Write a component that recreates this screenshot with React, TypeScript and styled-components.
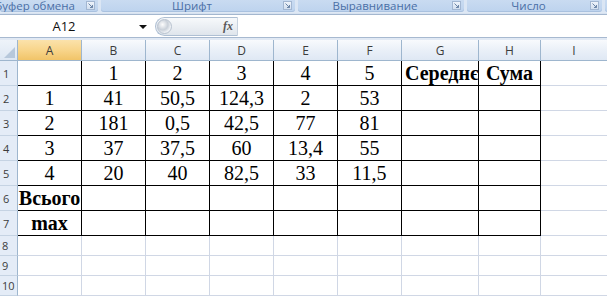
import styled, { createGlobalStyle } from 'styled-components';

const GlobalStyle = createGlobalStyle`
  html, body {
    margin: 0;
    padding: 0;
    background: #ffffff;
    overflow: hidden;
  }
`;

interface Group {
  label: string;
  width: number;
  lead?: boolean;
}

const groups: Group[] = [
  { label: 'Буфер обмена', width: 98, lead: true },
  { label: 'Шрифт', width: 194 },
  { label: 'Выравнивание', width: 166 },
  { label: 'Число', width: 135 },
  { label: '', width: 40 },
];

const columns = ['A', 'B', 'C', 'D', 'E', 'F', 'G', 'H', 'I'];
const colWidths = [64, 64, 64, 64, 64, 64, 77, 62, 67];

type Value = string | { text: string; bold?: boolean; left?: boolean };

const rows: Value[][] = [
  ['', '1', '2', '3', '4', '5', { text: 'Середнє', bold: true, left: true }, { text: 'Сума', bold: true }],
  ['1', '41', '50,5', '124,3', '2', '53', '', ''],
  ['2', '181', '0,5', '42,5', '77', '81', '', ''],
  ['3', '37', '37,5', '60', '13,4', '55', '', ''],
  ['4', '20', '40', '82,5', '33', '11,5', '', ''],
  [{ text: 'Всього', bold: true }, '', '', '', '', '', '', ''],
  [{ text: 'max', bold: true }, '', '', '', '', '', '', ''],
];

const App = () => (
  <>
    <GlobalStyle />
    <Window>
      <RibbonStrip>
        {groups.map((g) => (
          <RibbonGroup key={g.label || 'rest'} style={{ width: g.width }} $lead={g.lead}>
            <GroupLabel $lead={g.lead}>{g.label}</GroupLabel>
            {g.label && (
              <Launcher>
                <svg width="5" height="5" viewBox="0 0 5 5">
                  <path d="M0.5 0.5 L4.5 4.5 M2 4.5 H4.5 V2" stroke="#6d86a8" strokeWidth="1" fill="none" />
                </svg>
              </Launcher>
            )}
          </RibbonGroup>
        ))}
      </RibbonStrip>
      <RibbonFoot />
      <FormulaBar>
        <NameBox>A12</NameBox>
        <DropArrow />
        <FxPill>
          <Grip />
          <Fx>fx</Fx>
        </FxPill>
        <FormulaInput />
      </FormulaBar>
      <BarSeparator />
      <Sheet>
        <Corner />
        {columns.map((c) => (
          <ColHeader key={c} $selected={c === 'A'}>
            {c}
          </ColHeader>
        ))}
        {Array.from({ length: 10 }, (_, r) => {
          const data = rows[r];
          return [
            <RowHeader key={`h${r}`} $short={r >= 7}>
              {r + 1}
            </RowHeader>,
            ...columns.map((c, ci) => {
              const v = data && ci < 8 ? data[ci] : '';
              const cell = typeof v === 'string' ? { text: v } : v;
              return (
                <Cell
                  key={`${c}${r}`}
                  $boxed={!!data && ci < 8}
                  $bold={cell.bold}
                  $left={cell.left}
                >
                  {cell.text}
                </Cell>
              );
            }),
          ];
        })}
      </Sheet>
    </Window>
  </>
);

export default App;

const Window = styled.div`
  width: 607px;
  height: 297px;
  overflow: hidden;
  display: flex;
  flex-direction: column;
  background: #ffffff;
`;

const RibbonStrip = styled.div`
  display: flex;
  gap: 3px;
  height: 12px;
  background: #dbe6f4;
`;

const RibbonGroup = styled.div<{ $lead?: boolean }>`
  flex: none;
  display: flex;
  align-items: center;
  justify-content: ${({ $lead }) => ($lead ? 'flex-end' : 'flex-start')};
  height: 12px;
  background: linear-gradient(#c9dbf1, #bdd3ee);
  border-radius: 0 0 3px 3px;
  box-shadow: inset 0 -1px 0 #a9c1df;
  padding-right: 3px;
  box-sizing: border-box;
`;

const GroupLabel = styled.div<{ $lead?: boolean }>`
  flex: ${({ $lead }) => ($lead ? 'none' : '1')};
  text-align: center;
  margin-right: ${({ $lead }) => ($lead ? '11px' : '0')};
  white-space: nowrap;
  font-family: 'Open Sans', 'Liberation Sans', sans-serif;
  font-size: 11.5px;
  line-height: 12px;
  color: #4a6fa6;
`;

const Launcher = styled.div`
  flex: none;
  display: flex;
  align-items: center;
  justify-content: center;
  width: 7px;
  height: 7px;
  margin-top: -1px;
  border: 1px solid #a3b7d2;
  background: linear-gradient(#eef3fa, #d2dfef);
`;

const RibbonFoot = styled.div`
  height: 2px;
  background: linear-gradient(#e3ecf7, #d3dfee);
  border-bottom: 1px solid #a4b7cf;
`;

const FormulaBar = styled.div`
  display: flex;
  align-items: center;
  height: 22px;
  background: #ffffff;
`;

const NameBox = styled.div`
  width: 128px;
  text-align: center;
  font-family: 'Open Sans', 'Liberation Sans', sans-serif;
  font-size: 13px;
  color: #111;
`;

const DropArrow = styled.div`
  width: 0;
  height: 0;
  margin-left: 11px;
  margin-top: 2px;
  border-left: 4px solid transparent;
  border-right: 4px solid transparent;
  border-top: 4px solid #111;
`;

const FxPill = styled.div`
  display: flex;
  align-items: center;
  justify-content: space-between;
  margin-left: 8px;
  width: 83px;
  height: 19px;
  box-sizing: border-box;
  padding: 0 4px 0 1px;
  border: 1px solid #aebfd3;
  border-right-color: #c7d2df;
  border-radius: 10px 0 0 10px;
  background: linear-gradient(#f7f9fb, #dfe5ec);
`;

const Grip = styled.div`
  width: 13px;
  height: 13px;
  border-radius: 50%;
  background: radial-gradient(circle at 35% 35%, #fdfdfd 0, #c9d0d9 45%, #eef1f5 70%);
  border: 1px solid #b8c2cf;
`;

const Fx = styled.span`
  font-family: 'Liberation Serif', serif;
  font-style: italic;
  font-weight: bold;
  font-size: 12px;
  color: #5a5a5a;
`;

const FormulaInput = styled.div`
  flex: 1;
  height: 22px;
  margin-left: 2px;
  background: #ffffff;
`;

const BarSeparator = styled.div`
  height: 2px;
  border-top: 1px solid #a7b9d0;
  background: #e1e9f4;
`;

const Sheet = styled.div`
  display: grid;
  grid-template-columns: 18px ${colWidths.map((w) => `${w}px`).join(' ')};
  grid-template-rows: 21px repeat(7, 25px) repeat(3, 20px);
  font-family: 'Liberation Serif', 'Times New Roman', serif;
`;

const Corner = styled.div`
  position: relative;
  box-sizing: border-box;
  border-right: 1px solid #9eb6ce;
  border-bottom: 1px solid #9eb6ce;
  background: linear-gradient(#eef3f9, #dde7f3);
  &::after {
    content: '';
    position: absolute;
    right: 2px;
    bottom: 2px;
    border-left: 11px solid transparent;
    border-bottom: 11px solid #b7c8db;
  }
`;

const ColHeader = styled.div<{ $selected?: boolean }>`
  box-sizing: border-box;
  display: flex;
  align-items: center;
  justify-content: center;
  border-right: 1px solid #9eb6ce;
  border-bottom: 1px solid #9eb6ce;
  background: ${({ $selected }) =>
    $selected
      ? 'linear-gradient(#fbe2ab, #f8d58b 50%, #f1c468)'
      : 'linear-gradient(#f8fafd, #eaf0f8 50%, #dfe8f4)'};
  font-family: 'Open Sans', 'Liberation Sans', sans-serif;
  font-size: 12px;
  color: #3c3c3c;
`;

const RowHeader = styled.div<{ $short?: boolean }>`
  box-sizing: border-box;
  display: flex;
  align-items: center;
  padding-left: ${({ $short }) => ($short ? '2px' : '3px')};
  border-right: 1px solid #9eb6ce;
  border-bottom: 1px solid #c5d3e3;
  background: #e4ecf7;
  font-family: 'Open Sans', 'Liberation Sans', sans-serif;
  font-size: 11px;
  color: #3c3c3c;
`;

const Cell = styled.div<{ $boxed?: boolean; $bold?: boolean; $left?: boolean }>`
  box-sizing: border-box;
  display: flex;
  align-items: center;
  justify-content: ${({ $left }) => ($left ? 'flex-start' : 'center')};
  padding-left: ${({ $left }) => ($left ? '3px' : '0')};
  overflow: hidden;
  white-space: nowrap;
  border-right: 1px solid ${({ $boxed }) => ($boxed ? '#000000' : '#d0d7e5')};
  border-bottom: 1px solid ${({ $boxed }) => ($boxed ? '#000000' : '#d0d7e5')};
  font-size: 20px;
  font-weight: ${({ $bold }) => ($bold ? 'bold' : 'normal')};
  color: #000000;
`;
